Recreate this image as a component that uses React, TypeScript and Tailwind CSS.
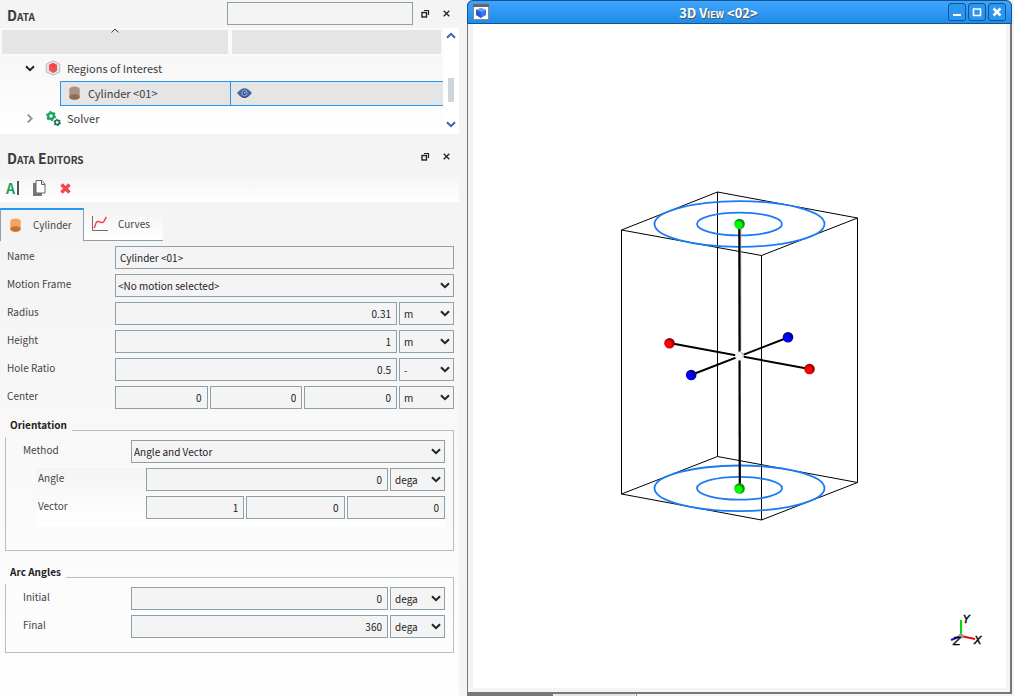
import React, { useState } from 'react';

const UNIT_BOX = 'w-[55px] shrink-0';
const INPUT = 'h-[23px] w-full min-w-0 flex-1 border border-[#8ea1ab] bg-[#f4f4f4] text-[10px] text-[#222] outline-none';

const Chevron: React.FC<{ className?: string }> = ({ className }) => (
  <svg viewBox="0 0 10 7" className={className} fill="none" stroke="currentColor" strokeWidth="2">
    <path d="M1 1.2 5 5.2 9 1.2" />
  </svg>
);

const FloatIcon = () => (
  <svg viewBox="0 0 9 9" className="h-[9px] w-[9px]" fill="none" stroke="#222">
    <path d="M3 1.5h4.500v4.500" strokeWidth="1.2" />
    <rect x="1" y="3.5" width="4.5" height="4.5" strokeWidth="1.4" />
  </svg>
);

const CloseIcon = () => (
  <svg viewBox="0 0 7 7" className="h-[7px] w-[7px]" fill="none" stroke="#222" strokeWidth="1.3">
    <path d="M.7.7 6.3 6.3M6.3.7.7 6.3" />
  </svg>
);

const CylinderIcon: React.FC<{ body: string; base: string }> = ({ body, base }) => (
  <svg viewBox="0 0 11 14" className="h-[14px] w-[11px]">
    <path d="M.3 3C.3-.4 10.7-.4 10.7 3v8c0 3.6-10.4 3.6-10.4 0z" fill={body} />
    <ellipse cx="5.5" cy="11" rx="5.2" ry="2.8" fill={base} />
  </svg>
);

const RegionIcon = () => (
  <svg viewBox="0 0 16 16" className="h-4 w-4">
    <path d="M8 .8 14.8 4v8L8 15.2 1.2 12V4z" fill="#e4e4e4" stroke="#bdbdbd" />
    <path d="M8 3 12 5v5.5L8 13l-4-2.500V5z" fill="#f4515a" />
    <path d="M8 3 12 5 8 7.400 4 5z" fill="#ff3b40" />
    <path d="M8 7.400V13l4-2.500V5z" fill="#e0525c" />
  </svg>
);

const Gear: React.FC<{ cx: number; cy: number; r: number; color: string }> = ({ cx, cy, r, color }) => (
  <g stroke={color} fill="none">
    <circle cx={cx} cy={cy} r={r * 0.6} strokeWidth={r * 0.45} />
    <circle cx={cx} cy={cy} r={r * 0.88} strokeWidth={r * 0.32} strokeDasharray={`${r * 0.46} ${r * 0.4615}`} />
  </g>
);

const SolverIcon = () => (
  <svg viewBox="0 0 15 15" className="h-[15px] w-[15px]">
    <Gear cx={5} cy={5} r={4.8} color="#16a05d" />
    <Gear cx={11.2} cy={11.4} r={3.6} color="#15794a" />
  </svg>
);

const EyeIcon = () => (
  <svg viewBox="0 0 15 10" className="h-[10px] w-[15px]">
    <path d="M0 5Q7.500-4.500 15 5 7.500 14.500 0 5z" fill="#4b66a8" />
    <path d="M1 6Q7.500 12.500 14 6 10 10 7.500 10T1 6z" fill="#24456f" />
    <circle cx="7.500" cy="5" r="2.600" fill="#27497c" stroke="#9db4cf" strokeWidth="1" />
    <circle cx="7.800" cy="4.700" r="1" fill="#a9bfd6" />
  </svg>
);

const CurvesIcon = () => (
  <svg viewBox="0 0 16 15" className="h-[15px] w-4" fill="none">
    <path d="M.5 0v14.500H16" stroke="#6d6d6d" />
    <path d="M2 12C4 10 3 6 5.500 5.500S8.500 7 10.500 6.500 13 3 14.300 1" stroke="#f0414c" strokeWidth="1.4" />
  </svg>
);

const CopyIcon = () => (
  <svg viewBox="0 0 13 16" className="h-4 w-[13px]">
    <path d="M0 3h3v10h6v3H0z" fill="#777" />
    <path d="M3 .5h6L12 4v9H3z" fill="#fff" stroke="#666" />
    <path d="M8.500.5V4.500H12" fill="#ddd" stroke="#666" />
  </svg>
);

const DockTitle: React.FC<{ title: string; children?: React.ReactNode }> = ({ title, children }) => (
  <div className="mb-[2px] flex h-[26px] items-center pl-[7px] pr-[9px]">
    <h2 className="flex-1 pt-1 text-[14px] font-bold leading-5 text-[#3b3b3b] [font-variant:small-caps]">{title}</h2>
    {children}
    <button aria-label="Float" className="ml-[2px] mr-[9px] p-1 pl-[6px]"><FloatIcon /></button>
    <button aria-label="Close"><CloseIcon /></button>
  </div>
);

const Select: React.FC<{ label: string; options: string[]; className?: string; pad?: string }> = ({
  label, options, className = 'flex-1', pad = 'pl-[2px]',
}) => (
  <div className={`relative flex ${className}`}>
    <select aria-label={label} className={`${INPUT} appearance-none pr-4 ${pad}`}>
      {options.map(o => <option key={o}>{o}</option>)}
    </select>
    <Chevron className="pointer-events-none absolute right-1 top-[8px] h-[7px] w-[10px] text-[#222]" />
  </div>
);

const Unit: React.FC<{ label: string; unit: string }> = ({ label, unit }) => (
  <Select label={`${label} unit`} options={[unit]} className={UNIT_BOX} pad="pl-1" />
);

const NumberBox: React.FC<{ label: string; value: string }> = ({ label, value }) => (
  <input aria-label={label} defaultValue={value} className={`${INPUT} pb-px pr-[5px] text-right`} />
);

const Row: React.FC<{ label: string; children: React.ReactNode }> = ({ label, children }) => (
  <div className="flex gap-[2px]">
    <span className="w-[106px] shrink-0 text-[10px] leading-5 text-[#444]">{label}</span>
    {children}
  </div>
);

const TreePanel = () => (
  <section>
    <DockTitle title="Data">
      <input aria-label="Search" className="h-[23px] w-[186px] border border-[#8ea1ab] bg-[#f4f4f4] px-1 text-[10px] outline-none" />
    </DockTitle>
    <div className="flex h-[106px] bg-white">
      <div className="min-w-0 flex-1">
        <div className="flex gap-1 bg-[#fafafa] p-[2px]">
          <div className="flex h-6 w-[226px] justify-center bg-[#e5e5e5]">
            <svg viewBox="0 0 10 7" className="-mt-[3px] h-[7px] w-[10px]" fill="none" stroke="#444">
              <path d="M1.500 5.500 5 2 8.500 5.500" />
            </svg>
          </div>
          <div className="h-6 flex-1 bg-[#e5e5e5]" />
        </div>
        <div className="bg-linear-to-b from-[#f7f7f7] to-white text-[11px] text-[#3c3c3c]">
          <div className="flex h-[25px] items-center pb-px pl-[25px]">
            <Chevron className="h-[7px] w-[10px] text-[#222]" />
            <span className="ml-[10px]"><RegionIcon /></span>
            <span className="ml-[6px]">Regions of Interest</span>
          </div>
          <div className="ml-[60px] flex h-[25px] items-stretch border-y border-l border-[#2196f3] bg-[#e5e5e5]">
            <div className="flex w-[170px] items-center border-r border-[#2196f3] pb-px pl-2">
              <CylinderIcon body="#ab917f" base="#8b6b58" />
              <span className="ml-2">Cylinder &lt;01&gt;</span>
            </div>
            <div className="flex items-center pb-px pl-[6px]"><EyeIcon /></div>
          </div>
          <div className="flex h-[25px] items-center pb-px pl-[25px]">
            <Chevron className="h-[7px] w-[10px] -rotate-90 text-[#999]" />
            <span className="ml-[11px]"><SolverIcon /></span>
            <span className="ml-[6px]">Solver</span>
          </div>
        </div>
      </div>
      <div className="flex w-4 flex-col items-center bg-white pb-[6px] pt-1 text-[#3d5cc4]">
        <Chevron className="h-[7px] w-[10px] rotate-180" />
        <div className="mt-[39px] h-6 w-[6px] bg-[#cfd6da]" />
        <Chevron className="mt-auto h-[7px] w-[10px]" />
      </div>
    </div>
  </section>
);

const EditorTabs: React.FC<{ active: string; onChange: (t: string) => void }> = ({ active, onChange }) => (
  <div className="flex h-[33px] items-stretch text-[10px] text-[#444]" role="tablist">
    <button
      role="tab"
      aria-selected={active === 'Cylinder'}
      onClick={() => onChange('Cylinder')}
      className="flex w-[84px] items-center border-l border-r border-t-2 border-l-[#8ea1ab] border-r-[#8ea1ab] border-t-[#2196f3] pb-[2px] pl-[9px]"
    >
      <CylinderIcon body="#f4a460" base="#c96f2c" />
      <span className="ml-3">Cylinder</span>
    </button>
    <button
      role="tab"
      aria-selected={active === 'Curves'}
      onClick={() => onChange('Curves')}
      className="mt-[2px] flex w-[79px] items-center border-b border-[#8ea1ab] bg-linear-to-b from-[#f4f4f4] to-white pb-[3px] pl-2"
    >
      <CurvesIcon />
      <span className="ml-[10px]">Curves</span>
    </button>
  </div>
);

const Group: React.FC<{ title: string; className: string; children: React.ReactNode }> = ({ title, className, children }) => (
  <fieldset className={`mx-[5px] min-w-0 border border-[#b9bdbd] ${className}`}>
    <legend className="-ml-px h-[14px] px-[5px] text-[10px] font-bold leading-[4px] text-[#222]">{title}</legend>
    {children}
  </fieldset>
);

const EditorPanel = () => {
  const [tab, setTab] = useState('Cylinder');
  return (
    <section className="flex flex-1 flex-col">
      <div className="pb-[3px] pt-[9px]"><DockTitle title="Data Editors" /></div>
      <div className="flex h-[28px] items-center bg-linear-to-b from-[#f4f4f4] to-white pl-[6px]">
        <button aria-label="Rename" className="flex items-center gap-[2px] text-[14px] font-bold leading-none text-[#16a05d]">
          A<span className="h-[14px] w-[2px] bg-[#555]" />
        </button>
        <button aria-label="Copy" className="ml-[14px]"><CopyIcon /></button>
        <button aria-label="Delete" className="ml-[14px]">
          <svg viewBox="0 0 11 11" className="h-[11px] w-[11px]" stroke="#f44350" strokeWidth="3.400">
            <path d="M1.500 1.500 9.500 9.500M9.500 1.500 1.500 9.500" />
          </svg>
        </button>
      </div>
      <div className="mt-[6px]"><EditorTabs active={tab} onChange={setTab} /></div>
      <div className="flex-1 bg-linear-to-b from-[#f4f4f4] to-[#fefefe] pt-[5px]">
        <div className="flex flex-col gap-[5px] pl-[7px] pr-[5px]">
          <Row label="Name">
            <input aria-label="Name" defaultValue="Cylinder <01>" className={`${INPUT} pb-px pl-1`} />
          </Row>
          <Row label="Motion Frame"><Select label="Motion Frame" options={['<No motion selected>']} /></Row>
          <Row label="Radius"><NumberBox label="Radius" value="0.31" /><Unit label="Radius" unit="m" /></Row>
          <Row label="Height"><NumberBox label="Height" value="1" /><Unit label="Height" unit="m" /></Row>
          <Row label="Hole Ratio"><NumberBox label="Hole Ratio" value="0.5" /><Unit label="Hole Ratio" unit="-" /></Row>
          <Row label="Center">
            <NumberBox label="Center X" value="0" />
            <NumberBox label="Center Y" value="0" />
            <NumberBox label="Center Z" value="0" />
            <Unit label="Center" unit="m" />
          </Row>
        </div>

        <Group title="Orientation" className="mt-[14px] h-[128px]">
          <div className="flex flex-col gap-[5px] pl-[17px] pr-2 pt-[3px]">
            <Row label="Method"><Select label="Method" options={['Angle and Vector']} /></Row>
            <div className="ml-[13px] flex flex-col gap-[5px] bg-linear-to-b from-[#f4f4f4] to-white pb-2 pl-[2px]">
              <Row label="Angle"><NumberBox label="Angle" value="0" /><Unit label="Angle" unit="dega" /></Row>
              <Row label="Vector">
                <NumberBox label="Vector X" value="1" />
                <NumberBox label="Vector Y" value="0" />
                <NumberBox label="Vector Z" value="0" />
              </Row>
            </div>
          </div>
        </Group>

        <Group title="Arc Angles" className="mt-[19px] h-[83px]">
          <div className="flex flex-col gap-[5px] pl-[17px] pr-2 pt-[3px]">
            <Row label="Initial"><NumberBox label="Initial" value="0" /><Unit label="Initial" unit="dega" /></Row>
            <Row label="Final"><NumberBox label="Final" value="360" /><Unit label="Final" unit="dega" /></Row>
          </div>
        </Group>
      </div>
    </section>
  );
};

const Scene = () => (
  <svg viewBox="473 24 533 664" className="h-full w-full" fill="none">
    <defs>
      <radialGradient id="green" cx=".4" cy=".6"><stop offset=".6" stopColor="#00ff00" /><stop offset="1" stopColor="#0a8a0a" /></radialGradient>
      <radialGradient id="red" cx=".4" cy=".6"><stop offset=".6" stopColor="#ff0000" /><stop offset="1" stopColor="#900" /></radialGradient>
      <radialGradient id="blue" cx=".4" cy=".6"><stop offset=".6" stopColor="#0000ff" /><stop offset="1" stopColor="#00008b" /></radialGradient>
    </defs>
    <g stroke="#000" strokeWidth="1">
      <path d="M621.500 230 717.500 192 857.500 218 761.500 255.500zM621.500 494 717.500 456.500 857.500 482.500 761.500 520z" />
      <path d="M621.500 230V494M717.500 192V456.500M857.500 218V482.500M761.500 255.500V520" />
    </g>
    <g stroke="#1a7cf5" strokeWidth="1.800">
      <ellipse cx="739.500" cy="224" rx="85" ry="22.800" />
      <ellipse cx="739.500" cy="224" rx="42.500" ry="11.400" />
      <ellipse cx="739.500" cy="488.300" rx="85" ry="22.800" />
      <ellipse cx="739.500" cy="488.300" rx="42.500" ry="11.400" />
    </g>
    <path d="M740.800 224V350" stroke="#aaa" />
    <path d="M739.300 224 739.800 488" stroke="#000" strokeWidth="2.200" />
    <path d="M669.500 343 809.500 369M691 375 788 337.500" stroke="#000" strokeWidth="1.900" />
    <circle cx="739.500" cy="356" r="4.500" fill="#f2f2f2" />
    <path d="M741 352a4.500 4.500 0 0 1 2 5" stroke="#aaa" />
    <circle cx="739.500" cy="224" r="5.300" fill="url(#green)" />
    <circle cx="739.500" cy="488.500" r="5.300" fill="url(#green)" />
    <circle cx="669.500" cy="343.200" r="5.300" fill="url(#red)" />
    <circle cx="809.500" cy="369" r="5.300" fill="url(#red)" />
    <circle cx="788" cy="337.300" r="5.300" fill="url(#blue)" />
    <circle cx="691.200" cy="375" r="5.300" fill="url(#blue)" />
    <g strokeWidth="2">
      <path d="M961 636V620" stroke="#00dc00" />
      <path d="M961 636 975 639" stroke="#e01010" />
      <path d="M961 636 951 640" stroke="#1010d0" />
      <circle cx="961" cy="636" r="2.500" fill="#999" />
    </g>
    <g fill="#000" stroke="#000" strokeWidth=".4" fontSize="11" fontStyle="italic" fontFamily="DejaVu Sans, sans-serif">
      <text x="963" y="623">Y</text>
      <text x="974" y="644">X</text>
      <text x="953" y="645">Z</text>
    </g>
  </svg>
);

const WindowButton: React.FC<{ label: string; children: React.ReactNode }> = ({ label, children }) => (
  <button aria-label={label} className="flex h-[18px] w-[18px] items-center justify-center rounded-[3px] border border-[#135391] bg-[#2b96ef]">
    <svg viewBox="0 0 10 10" className="h-[10px] w-[10px]" fill="none" stroke="#fff" strokeWidth="2">{children}</svg>
  </button>
);

const ViewWindow = () => (
  <main className="flex min-h-0 flex-1 flex-col rounded-t-[6px] border-b-2 border-l border-r-2 border-[#777] bg-[#f4f4f4]">
    <header className="-ml-px -mr-[2px] flex h-6 items-center rounded-t-[6px] border border-[#135391] bg-linear-to-b from-[#3da5fd] to-[#1e8ce9] pl-[5px] pr-[5px]">
      <svg viewBox="0 0 16 16" className="h-4 w-4">
        <path d="M.5.5h15v15H.5z" fill="#fff" stroke="#888" />
        <path d="M0 0h16v3H0z" fill="#666" />
        <path d="M8 4 13 6v5l-5 3-5-3V6z" fill="#3973ee" />
        <path d="M8 4 13 6 8 8 3 6z" fill="#6ba0ff" />
        <path d="M3 6 8 8v6l-5-3z" fill="#275bd3" />
      </svg>
      <h1 className="flex-1 pt-[2px] text-center text-[13px] font-bold leading-5 text-white [font-variant:small-caps] [text-shadow:1px_1px_0_#555]">3D View &lt;02&gt;</h1>
      <div className="flex gap-[2px]">
        <WindowButton label="Minimize"><path d="M1 8h8" /></WindowButton>
        <WindowButton label="Maximize"><path d="M1.500 2h7v6.500h-7zM1 2h8" strokeWidth="1.500" /></WindowButton>
        <WindowButton label="Close"><path d="M1.500 1.500 8.500 8.500M8.500 1.500 1.500 8.500" strokeWidth="2.500" /></WindowButton>
      </div>
    </header>
    <div className="mb-1 ml-[5px] mr-1 min-h-0 flex-1 bg-white"><Scene /></div>
  </main>
);

const App: React.FC = () => (
  <div className="grid min-h-screen grid-cols-[459fr_555fr] bg-[#f4f4f4] font-['Noto_Sans_CJK_SC',sans-serif]">
    <div className="flex min-w-0 flex-col">
      <TreePanel />
      <EditorPanel />
    </div>
    <div className="flex h-screen min-w-0 flex-col pl-2 pr-[2px]">
      <ViewWindow />
      <div className="flex h-[2px] gap-px">
        <div className="w-[86px] bg-[#777]" />
        <div className="w-[81px] bg-[#e4e4e4]" />
        <div className="w-px bg-[#999]" />
      </div>
    </div>
  </div>
);

export default App;
